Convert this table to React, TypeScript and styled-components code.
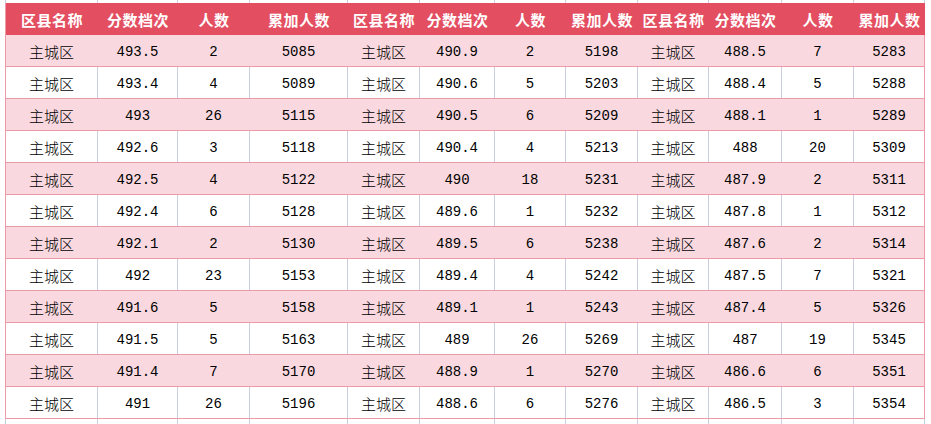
import React from "react";
import styled, { createGlobalStyle } from "styled-components";

const GlobalStyle = createGlobalStyle`
  html, body {
    margin: 0;
    padding: 0;
    background: #ffffff;
  }
  * {
    box-sizing: border-box;
  }
`;

const COLS = "92px 80px 72px 98px 72px 75px 71px 72px 71px 73px 72px 71px";
const GRID = "#c8cde0";
const PINK_LINE = "#ec9aa7";
const PINK = "#f9d9df";
const RED = "#e44e61";

const Sheet = styled.div`
  width: 931px;
  height: 424px;
  overflow: hidden;
  padding-left: 5px;
  font-family: "Noto Sans CJK SC", sans-serif;
`;

const Strip = styled.div<{ $h: number }>`
  display: grid;
  grid-template-columns: ${COLS};
  height: ${(p) => p.$h}px;
  border-left: 1px solid ${GRID};
`;

const StripCell = styled.div`
  border-right: 1px solid ${GRID};
`;

const Table = styled.div`
  border-left: 1px solid ${PINK_LINE};
  width: 920px;
`;

const HeaderRow = styled.div`
  display: grid;
  grid-template-columns: ${COLS};
  height: 32px;
  background: ${RED};
`;

const HeaderCell = styled.div`
  display: flex;
  align-items: center;
  justify-content: center;
  color: #ffffff;
  font-weight: 700;
  font-size: 15px;
  letter-spacing: 0.5px;
  white-space: nowrap;
`;

const Row = styled.div<{ $pink: boolean }>`
  display: grid;
  grid-template-columns: ${COLS};
  height: 32px;
  background: ${(p) => (p.$pink ? PINK : "#ffffff")};
  border-bottom: 1px solid ${PINK_LINE};
`;

const Cell = styled.div<{ $pink: boolean; $last?: boolean }>`
  display: flex;
  align-items: center;
  justify-content: center;
  color: #000000;
  border-right: 1px solid
    ${(p) => (p.$last ? PINK_LINE : p.$pink ? PINK : GRID)};
`;

const NameText = styled.span`
  font-family: "Noto Sans CJK SC", sans-serif;
  font-size: 15px;
  font-weight: 300;
  padding-top: 1px;
`;

const NumText = styled.span`
  font-family: "Liberation Mono", monospace;
  font-size: 14px;
  padding-top: 2px;
`;

type Entry = [string, string, string];

const blocks: Entry[][] = [
  [
    ["493.5", "2", "5085"],
    ["493.4", "4", "5089"],
    ["493", "26", "5115"],
    ["492.6", "3", "5118"],
    ["492.5", "4", "5122"],
    ["492.4", "6", "5128"],
    ["492.1", "2", "5130"],
    ["492", "23", "5153"],
    ["491.6", "5", "5158"],
    ["491.5", "5", "5163"],
    ["491.4", "7", "5170"],
    ["491", "26", "5196"],
  ],
  [
    ["490.9", "2", "5198"],
    ["490.6", "5", "5203"],
    ["490.5", "6", "5209"],
    ["490.4", "4", "5213"],
    ["490", "18", "5231"],
    ["489.6", "1", "5232"],
    ["489.5", "6", "5238"],
    ["489.4", "4", "5242"],
    ["489.1", "1", "5243"],
    ["489", "26", "5269"],
    ["488.9", "1", "5270"],
    ["488.6", "6", "5276"],
  ],
  [
    ["488.5", "7", "5283"],
    ["488.4", "5", "5288"],
    ["488.1", "1", "5289"],
    ["488", "20", "5309"],
    ["487.9", "2", "5311"],
    ["487.8", "1", "5312"],
    ["487.6", "2", "5314"],
    ["487.5", "7", "5321"],
    ["487.4", "5", "5326"],
    ["487", "19", "5345"],
    ["486.6", "6", "5351"],
    ["486.5", "3", "5354"],
  ],
];

const headers = ["区县名称", "分数档次", "人数", "累加人数"];

const App: React.FC = () => {
  const rowCount = blocks[0].length;
  return (
    <>
      <GlobalStyle />
      <Sheet>
        <Strip $h={3}>
          {Array.from({ length: 12 }).map((_, i) => (
            <StripCell key={i} />
          ))}
        </Strip>
        <Table>
          <HeaderRow>
            {blocks.map((_, b) =>
              headers.map((h) => <HeaderCell key={`${b}-${h}`}>{h}</HeaderCell>)
            )}
          </HeaderRow>
          {Array.from({ length: rowCount }).map((_, r) => {
            const pink = r % 2 === 0;
            return (
              <Row key={r} $pink={pink}>
                {blocks.map((block, b) => {
                  const [score, count, total] = block[r];
                  const last = b === blocks.length - 1;
                  return (
                    <React.Fragment key={b}>
                      <Cell $pink={pink}>
                        <NameText>主城区</NameText>
                      </Cell>
                      <Cell $pink={pink}>
                        <NumText>{score}</NumText>
                      </Cell>
                      <Cell $pink={pink}>
                        <NumText>{count}</NumText>
                      </Cell>
                      <Cell $pink={pink} $last={last}>
                        <NumText>{total}</NumText>
                      </Cell>
                    </React.Fragment>
                  );
                })}
              </Row>
            );
          })}
        </Table>
        <Strip $h={6}>
          {Array.from({ length: 12 }).map((_, i) => (
            <StripCell key={i} />
          ))}
        </Strip>
      </Sheet>
    </>
  );
};

export default App;
